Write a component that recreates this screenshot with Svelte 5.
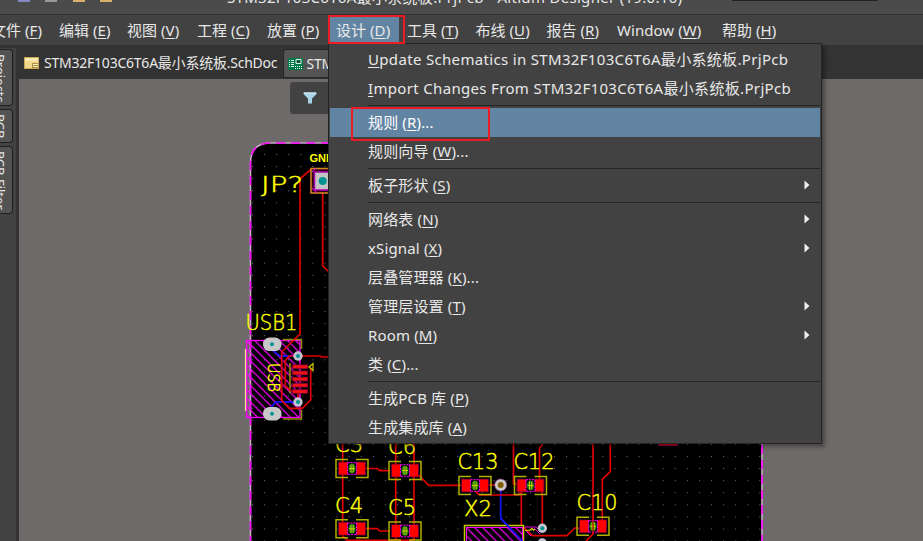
<script>
  const bar = [
    { t: '文件', k: 'F', w: 68 },
    { t: '编辑', k: 'E', w: 68 },
    { t: '视图', k: 'V', w: 70 },
    { t: '工程', k: 'C', w: 70 },
    { t: '放置', k: 'P', w: 69 },
    { t: '设计', k: 'D', w: 71, on: true },
    { t: '工具', k: 'T', w: 68.5 },
    { t: '布线', k: 'U', w: 71 },
    { t: '报告', k: 'R', w: 70.5 },
    { t: 'Window', k: 'W', w: 105 },
    { t: '帮助', k: 'H', w: 60 }
  ];
  const groups = [
    [
      { k: 'U', post: 'pdate Schematics in STM32F103C6T6A最小系统板.PrjPcb', long: true },
      { k: 'I', post: 'mport Changes From STM32F103C6T6A最小系统板.PrjPcb', long: true }
    ],
    [
      { pre: '规则 (', k: 'R', post: ')...', on: true },
      { pre: '规则向导 (', k: 'W', post: ')...' }
    ],
    [{ pre: '板子形状 (', k: 'S', post: ')', sub: true }],
    [
      { pre: '网络表 (', k: 'N', post: ')', sub: true },
      { pre: 'xSignal (', k: 'X', post: ')', sub: true },
      { pre: '层叠管理器 (', k: 'K', post: ')...' },
      { pre: '管理层设置 (', k: 'T', post: ')', sub: true },
      { pre: 'Room (', k: 'M', post: ')', sub: true },
      { pre: '类 (', k: 'C', post: ')...' }
    ],
    [
      { pre: '生成PCB 库 (', k: 'P', post: ')' },
      { pre: '生成集成库 (', k: 'A', post: ')' }
    ]
  ];
  const caps = [[352, 468.5], [405, 470.5], [352, 528.8], [405, 531], [475, 485.5], [530.5, 485.5], [593, 526.3]];
  const labels = [
    ['JP?', 261, 192, 42], ['USB1', 245.5, 330, 52], ['C3', 335, 452, 28], ['C6', 388, 454, 28],
    ['C4', 335, 513, 28], ['C5', 388, 515, 28], ['C13', 457.5, 469, 41], ['C12', 513.5, 469, 41],
    ['X2', 464, 516, 28], ['C10', 576.5, 510, 41]
  ];
  const pins = [366.7, 372.9, 379.1, 385.3, 391.5];
</script>

<div class="app">
  <header class="title">
    <div class="quick"><i class="q1"></i><i class="q2"></i><i class="q3"></i><i class="q4"></i></div>
    <span class="name">STM32F103C6T6A最小系统板.PrjPcb - Altium Designer (19.0.10)</span>
    <i class="search"></i>
  </header>
  <nav class="menubar">
    {#each bar as m}
      <span class="mi" class:on={m.on} style="width:{m.w}px"><b>{m.t} (<u>{m.k}</u>)</b></span>
    {/each}
  </nav>
  <div class="work">
    <aside>
      <div class="side s1"><span>Projects</span></div>
      <div class="side s2"><span>PCB</span></div>
      <div class="side s3"><span>PCB Filter</span></div>
    </aside>
    <main>
      <div class="tabs">
        <div class="tab">
          <svg width="15" height="12" viewBox="0 0 15 12"><rect width="15" height="12" fill="#c9a956"/><rect x="1" y="1" width="13" height="10" fill="#f0d98c"/><path d="M1 1h13v3H1z" fill="#f8e9ae"/><path d="M8 6h6v5H8z" fill="#a98d45"/><path d="M9 7.5h5M9 9.5h5" stroke="#fff0b8"/></svg>
          <span>STM32F103C6T6A最小系统板.SchDoc</span>
        </div>
        <div class="tab active">
          <svg width="15" height="12" viewBox="0 0 15 12"><rect width="15" height="12" rx="1" fill="#007a4c"/><path d="M1 2.500h5M1 4.500h5M1 6.500h5M1 8.500h5" stroke="#d8f5e6" stroke-dasharray="1 1 3 1"/><path d="M8 1.500h5v4H8z" fill="#12593c" stroke="#d8f5e6"/><path d="M7 8.500h7M7 10.500h7" stroke="#d8f5e6" stroke-dasharray="1 1"/></svg>
          <span>STM32F103C6T6A</span>
        </div>
      </div>
      <div class="canvas">
        <svg class="pcb" width="904" height="462" viewBox="19 79 904 462">
          <defs>
            <pattern id="grid" x="252" y="154" width="12.08" height="12.08" patternUnits="userSpaceOnUse"><rect width="1" height="1" fill="#747474"/></pattern>
            <pattern id="hatch" x="246" y="340" width="8.2" height="8.2" patternUnits="userSpaceOnUse"><path d="M-1 -1L9.200 9.200M-1 7.200L1 9.200M7.200 -1L9.200 1" stroke="#f0f" stroke-width="1.15"/></pattern>
            <g id="cap">
              <path d="M-4 -9H-16V9H-4M4 -9H16V9H4" fill="none" stroke="#b0b000" stroke-width="1.5"/>
              <path d="M-14 -6.800h10v13.600h-10zM4 -6.800h10v13.600h-10z" fill="#60003c"/>
              <path d="M-13 -6h8.400v12h-8.400zM4.600 -6h8.400v12h-8.400z" fill="#f00"/>
              <rect x="-4.500" y="-5.800" width="9" height="11.600" fill="#100010" stroke="#f0f" stroke-dasharray="2 1"/>
              <ellipse rx="3.600" ry="5" fill="#17780a"/>
              <path d="M-1 -4v8M1.200 -4v8M-3 0h6" stroke="#d8d800" stroke-width=".9"/>
            </g>
          </defs>
          <path d="M251 541V163Q251 143 271 143H742Q762 143 762 163V541Z" fill="#000"/>
          <rect x="252" y="154" width="509" height="387" fill="url(#grid)"/>
          <path d="M250.500 545V163Q250.500 143 270.500 143H742Q762 143 762 163V545" fill="none" stroke="#c9a7c9" stroke-width="1.600"/>
          <path d="M250.500 545V163Q250.500 143 270.500 143H742Q762 143 762 163V545" fill="none" stroke="#f0f" stroke-width="1.600" stroke-dasharray="9 6"/>

          <rect x="246.500" y="340.500" width="53.500" height="77" fill="url(#hatch)" stroke="#f0f" stroke-width="1.300"/>
          <path d="M245.500 349V411" stroke="#ffe08c" stroke-width="1.200"/>
          <path d="M283 339.500H301.500V349M283 419H301.500V410" fill="none" stroke="#8c8c00" stroke-width="1.500"/>
          <path d="M290 363V393.500" stroke="#8c8c00" stroke-width="1.600"/>
          <g fill="none" stroke="#1414f0" stroke-width="1.800">
            <path d="M273.500 351L279.500 356H298M272 410V406L276 402H298"/>
            <path d="M500.700 488V518.300L522.500 541"/>
          </g>
          <g fill="none" stroke="#e00000" stroke-width="1.700">
            <path d="M328 170H310L300 179V334L281.700 352V400.700L289.300 408.300H302.300L310.700 400V368"/>
            <path d="M322.700 190V266L329 272M298 356H320L322 357H330"/>
            <path d="M298 356H289L285.300 361V386L292 391.500M298 391V402"/>
            <path d="M342.700 444V536L347 540.300H412L415 537M364 468.500H377.300L379.700 470.700H390M364 528.700H377.300L379.700 531H390"/>
            <path d="M395.700 444V541M414 444V541M414 470L428.700 485.300H466M485 485H500"/>
            <path d="M513.500 444V484H520M543 444L539.500 448V482L542.300 495V528M471.700 488L479.300 495H519L523 488M521.300 488V525L532.300 535.700H566.700L575 528H584"/>
            <path d="M593 444V534L586 541M610.300 444V471.700L602.300 479.300V524"/>
          </g>
          <path d="M658 444.500H678" stroke="#800060" stroke-width="3"/><path d="M659 444.500H677" stroke="#d80000" stroke-width="1.200"/>

          <g><rect x="311" y="168.500" width="26" height="24.500" fill="#300018" stroke="#d98a20" stroke-width="1.500"/><path d="M312 172l4-4M312 188l5 5" stroke="#f0f"/><rect x="314.500" y="172" width="20" height="18" fill="#c4c4c4" stroke="#b000b0" stroke-width="1.500"/><circle cx="322.700" cy="181" r="4" fill="#009494"/></g>
          {#each pins as y}
            <rect x="291.500" y={y - 2.3} width="16.500" height="4.600" fill="#700030"/>
            <rect x="293" y={y - 1.5} width="14.300" height="3" fill="#f01018"/>
          {/each}
          <path d="M309 367L313 363.500V370.500Z" fill="none" stroke="#d0d000" stroke-width="1.200"/>
          {#each [344.3, 413.7] as y}
            <rect x="263" y={y - 6.8} width="18.500" height="13.600" rx="6.500" fill="#c8c8c8"/><circle cx="272" cy={y} r="2" fill="#009494"/>
          {/each}
          {#each caps as c}<use href="#cap" x={c[0]} y={c[1]} />{/each}
          <path d="M593 510V534" stroke="#d80000" stroke-width="1.200"/>

          <rect x="464.500" y="525.500" width="59" height="20" fill="#000" stroke="#c8c800" stroke-width="1.500"/>
          <rect x="466.500" y="527.500" width="56" height="20" fill="url(#hatch)" stroke="#f0f"/>
          <path d="M500.700 518.300L522.500 541" stroke="#1414f0" stroke-width="1.800"/>
          <path d="M525 527H536L542 533M526 531L531 536M534 528L540 534" stroke="#e800e8" fill="none"/>
          <path d="M525 530.500L535 529.500M529 531l3-3 2 3" stroke="#d0d000" fill="none"/>
          {#each [[298, 356], [298, 402], [542.3, 528.3], [542.3, 543]] as v}
            <circle cx={v[0]} cy={v[1]} r="4.700" fill="#c4c4d0"/><circle cx={v[0]} cy={v[1]} r="2" fill="#009090"/>
          {/each}
          <circle cx="500.700" cy="485" r="6" fill="#ccc" stroke="#904090" stroke-width=".7"/><circle cx="500.700" cy="485" r="3" fill="#806000"/>

          <g class="silk">
            {#each labels as l}<text x={l[1]} y={l[2]} textLength={l[3]} lengthAdjust="spacingAndGlyphs">{l[0]}</text>{/each}
          </g>
          <text class="gnd" x="309.500" y="162.300">GND</text>
          <text class="usb" transform="translate(267.500 363) rotate(90)" textLength="29" lengthAdjust="spacingAndGlyphs">USB</text>
        </svg>
        <div class="filter"><svg width="14" height="12" viewBox="0 0 14 12"><path d="M.5 .5H13.500V2L9 6.500V11.500H5V6.500L.5 2Z" fill="#a9d3e6"/><path d="M1 1H13" stroke="#e2f3fa"/></svg></div>
      </div>
    </main>
  </div>

  <div class="menu">
    {#each groups as g, i}
      {#if i}<hr />{/if}
      {#each g as it}
        <div class="row" class:on={it.on}>
          <span class:long={it.long}>{it.pre ?? ''}<u>{it.k}</u>{it.post}</span>
          {#if it.sub}<svg width="6" height="10" viewBox="0 0 6 10"><path d="M.5 .5L5.500 5L.5 9.500Z" fill="#f0f0f0"/></svg>{/if}
        </div>
      {/each}
    {/each}
  </div>
  <div class="mark m1"></div>
  <div class="mark m2"></div>
</div>

<style>
  :global(body) { background: #333; overflow: hidden; }
  .app { position: relative; width: 923px; height: 541px; overflow: hidden; display: flex; flex-direction: column; background: #333; color: #e8e8e8; font: 15px/20px "Noto Sans", "Noto Sans CJK SC", sans-serif; white-space: nowrap; }
  .title { height: 14px; flex: none; background: #4b4b4b; border-bottom: 1px solid #303030; position: relative; overflow: hidden; }
  .name { position: absolute; left: 227px; top: -13px; letter-spacing: .3px; }
  .quick { display: flex; height: 2px; padding-left: 18px; }
  .quick i { width: 12px; height: 2px; margin-right: 15px; background: #8588c0; }
  .quick .q2 { background: #999; margin-right: 16px; }
  .quick .q3, .quick .q4 { background: #d9b06a; }
  .search { position: absolute; left: 732px; top: 0; width: 146px; height: 1px; background: #222; }
  .menubar { height: 30px; flex: none; display: flex; background: #424242; }
  .mi { flex: none; height: 25px; margin-top: 2px; position: relative; line-height: 27px; letter-spacing: .05px; }
  .mi:first-child { margin-left: -9px; }
  .mi b { font-weight: 400; }
  .mi.on::before { content: ""; position: absolute; left: -6px; top: 0; width: 69px; height: 25px; background: #6284a3; }
  .mi.on b { position: relative; }
  u { text-underline-offset: 2px; text-decoration-thickness: 1px; text-decoration-skip-ink: none; }
  .work { flex: 1; display: flex; min-height: 0; }
  aside { width: 16px; flex: none; margin: 3px 3px 0 0; background: #424242; padding-top: 1px; }
  .side { box-sizing: border-box; width: 13px; border: 1px solid #202020; border-left: 0; border-radius: 0 4px 4px 0; background: #535353; overflow: hidden; margin-bottom: 3px; font-size: 13px; display: flex; justify-content: flex-end; }
  .side span { writing-mode: vertical-rl; line-height: 16px; margin-right: 4px; padding-top: 4px; flex: none; }
  .s1 { height: 57px; } .s2 { height: 34px; } .s3 { height: 68px; }
  main { flex: 1; min-width: 0; display: flex; flex-direction: column; }
  .tabs { height: 34px; flex: none; display: flex; }
  .tab { width: 263.500px; flex: none; box-sizing: border-box; display: flex; align-items: center; padding: 2px 0 0 5px; gap: 5px; font-size: 14px; }
  .tab span { letter-spacing: -.23px; }
  .tab.active { width: 200px; margin: 4px 0 1px; padding-top: 0; padding-left: 4px; gap: 4px; background: #545454; border: 1px solid #252525; border-radius: 3px 3px 0 0; }
  .canvas { flex: 1; background: #6e6a69; position: relative; min-height: 0; }
  .pcb { display: block; }
  .silk text, .usb { font: 200 22px "DejaVu Sans", "DejaVu Sans Light", sans-serif; fill: #ff0; stroke: #ff0; stroke-width: .45px; }
  .usb { font-size: 15px; }
  .gnd { font: 700 11px "Liberation Sans", sans-serif; fill: #ff0; }
  .filter { position: absolute; left: 271px; top: 3px; width: 60px; height: 32px; box-sizing: border-box; padding: 10px 0 0 13px; border-radius: 3px; background: #424242; }
  .filter svg { display: block; }
  .menu { position: absolute; left: 328px; top: 43px; width: 494px; height: 401px; box-sizing: border-box; border: 1px solid #242424; padding: 1px; background: #424242; box-shadow: 3px 3px 4px rgba(0,0,0,.35); }
  .row { height: 29px; box-sizing: border-box; display: flex; align-items: center; justify-content: space-between; padding: 0 10px 2px 38px; letter-spacing: .15px; }
  .row.on { background: #6284a3; color: #fff; }
  .row .long { letter-spacing: .33px; }
  hr { height: 1px; border: 0; margin: 2px 0 2px 38px; background: #242424; }
  .mark { position: absolute; box-sizing: border-box; border: 2px solid #ed1c24; }
  .m1 { left: 328px; top: 15px; width: 77px; height: 29px; }
  .m2 { left: 351px; top: 107px; width: 139px; height: 34px; }
</style>
